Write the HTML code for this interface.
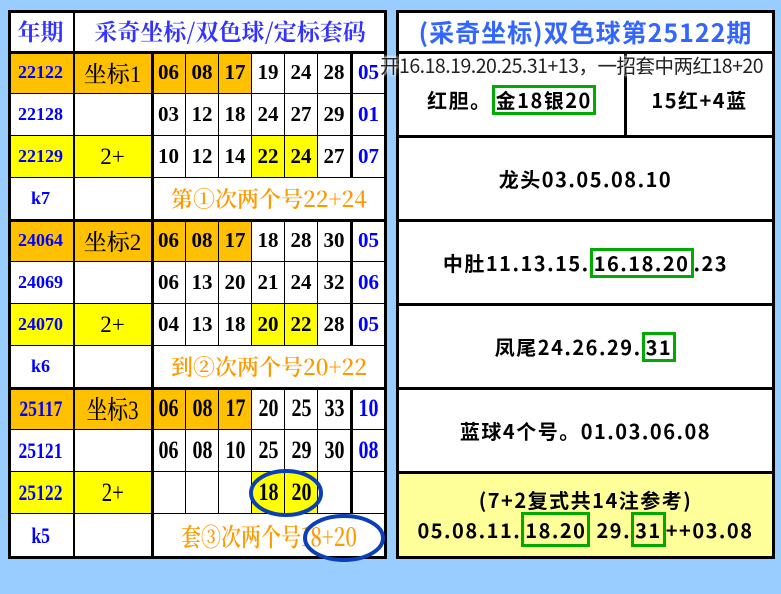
<!DOCTYPE html><html><head><meta charset="utf-8"><style>
*{margin:0;padding:0;box-sizing:border-box}
body{width:781px;height:594px;background:#99ccff;position:relative;overflow:hidden;font-family:"Liberation Serif","Noto Serif CJK SC",serif}
.c{position:absolute;display:flex;align-items:center;justify-content:center;border-right:1px solid #000;border-bottom:1px solid #000;background:#fff;white-space:nowrap}
.n{font-weight:bold;font-size:21px;color:#000}
.y{font-weight:bold;font-size:18px;color:#0000ff}
.b{color:#0000ff}
.o{background:#ffc000}
.ye{background:#ffff00}
.z{font-size:23px;font-weight:500}
.t{font-size:22px;color:#ff9900;font-family:"Noto Serif CJK SC",serif;font-weight:600}
.L{position:absolute;background:#000}
.s3 span{display:inline-block;transform:scaleX(.8)}
.s3 .n{font-size:25px}
.s3 .y{font-size:22px}
.s3 .z{font-size:26px}
.s3 .t{font-size:25px}
.r{position:absolute;background:#fff;display:flex;align-items:center;justify-content:center;font-family:"Noto Sans CJK SC",sans-serif;font-weight:bold;font-size:20px;color:#000;white-space:nowrap;letter-spacing:1.5px}
.g{border:3px solid #00aa00;padding:0 1px;line-height:24px}
</style></head><body>
<div class="c" style="left:8px;top:10px;width:66px;height:42px;font-size:23px;font-weight:bold;color:#3333ff;font-family:'Noto Serif CJK SC',serif">年期</div>
<div class="c" style="left:74px;top:10px;width:313px;height:42px;font-size:23px;font-weight:bold;color:#3333ff;font-family:'Noto Serif CJK SC',serif">采奇坐标/双色球/定标套码</div>

<div class="c y o" style="left:8px;top:52px;width:66px;height:42px">22122</div>
<div class="c z o" style="left:74px;top:52px;width:78px;height:42px">坐标1</div>
<div class="c n o" style="left:152px;top:52px;width:34px;height:42px">06</div>
<div class="c n o" style="left:186px;top:52px;width:33px;height:42px">08</div>
<div class="c n o" style="left:219px;top:52px;width:33px;height:42px">17</div>
<div class="c n" style="left:252px;top:52px;width:33px;height:42px">19</div>
<div class="c n" style="left:285px;top:52px;width:33px;height:42px">24</div>
<div class="c n" style="left:318px;top:52px;width:33px;height:42px">28</div>
<div class="c n b" style="left:351px;top:52px;width:36px;height:42px">05</div>

<div class="c y" style="left:8px;top:94px;width:66px;height:42px">22128</div>
<div class="c" style="left:74px;top:94px;width:78px;height:42px"></div>
<div class="c n" style="left:152px;top:94px;width:34px;height:42px">03</div>
<div class="c n" style="left:186px;top:94px;width:33px;height:42px">12</div>
<div class="c n" style="left:219px;top:94px;width:33px;height:42px">18</div>
<div class="c n" style="left:252px;top:94px;width:33px;height:42px">24</div>
<div class="c n" style="left:285px;top:94px;width:33px;height:42px">27</div>
<div class="c n" style="left:318px;top:94px;width:33px;height:42px">29</div>
<div class="c n b" style="left:351px;top:94px;width:36px;height:42px">01</div>

<div class="c y ye" style="left:8px;top:136px;width:66px;height:42px">22129</div>
<div class="c z ye" style="left:74px;top:136px;width:78px;height:42px">2+</div>
<div class="c n" style="left:152px;top:136px;width:34px;height:42px">10</div>
<div class="c n" style="left:186px;top:136px;width:33px;height:42px">12</div>
<div class="c n" style="left:219px;top:136px;width:33px;height:42px">14</div>
<div class="c n ye" style="left:252px;top:136px;width:33px;height:42px">22</div>
<div class="c n ye" style="left:285px;top:136px;width:33px;height:42px">24</div>
<div class="c n" style="left:318px;top:136px;width:33px;height:42px">27</div>
<div class="c n b" style="left:351px;top:136px;width:36px;height:42px">07</div>

<div class="c y" style="left:8px;top:178px;width:66px;height:42px">k7</div>
<div class="c" style="left:74px;top:178px;width:78px;height:42px"></div>
<div class="c t" style="left:152px;top:178px;width:235px;height:42px">第①次两个号22+24</div>

<div class="c y o" style="left:8px;top:220px;width:66px;height:42px">24064</div>
<div class="c z o" style="left:74px;top:220px;width:78px;height:42px">坐标2</div>
<div class="c n o" style="left:152px;top:220px;width:34px;height:42px">06</div>
<div class="c n o" style="left:186px;top:220px;width:33px;height:42px">08</div>
<div class="c n o" style="left:219px;top:220px;width:33px;height:42px">17</div>
<div class="c n" style="left:252px;top:220px;width:33px;height:42px">18</div>
<div class="c n" style="left:285px;top:220px;width:33px;height:42px">28</div>
<div class="c n" style="left:318px;top:220px;width:33px;height:42px">30</div>
<div class="c n b" style="left:351px;top:220px;width:36px;height:42px">05</div>

<div class="c y" style="left:8px;top:262px;width:66px;height:42px">24069</div>
<div class="c" style="left:74px;top:262px;width:78px;height:42px"></div>
<div class="c n" style="left:152px;top:262px;width:34px;height:42px">06</div>
<div class="c n" style="left:186px;top:262px;width:33px;height:42px">13</div>
<div class="c n" style="left:219px;top:262px;width:33px;height:42px">20</div>
<div class="c n" style="left:252px;top:262px;width:33px;height:42px">21</div>
<div class="c n" style="left:285px;top:262px;width:33px;height:42px">24</div>
<div class="c n" style="left:318px;top:262px;width:33px;height:42px">32</div>
<div class="c n b" style="left:351px;top:262px;width:36px;height:42px">06</div>

<div class="c y ye" style="left:8px;top:304px;width:66px;height:42px">24070</div>
<div class="c z ye" style="left:74px;top:304px;width:78px;height:42px">2+</div>
<div class="c n" style="left:152px;top:304px;width:34px;height:42px">04</div>
<div class="c n" style="left:186px;top:304px;width:33px;height:42px">13</div>
<div class="c n" style="left:219px;top:304px;width:33px;height:42px">18</div>
<div class="c n ye" style="left:252px;top:304px;width:33px;height:42px">20</div>
<div class="c n ye" style="left:285px;top:304px;width:33px;height:42px">22</div>
<div class="c n" style="left:318px;top:304px;width:33px;height:42px">28</div>
<div class="c n b" style="left:351px;top:304px;width:36px;height:42px">05</div>

<div class="c y" style="left:8px;top:346px;width:66px;height:42px">k6</div>
<div class="c" style="left:74px;top:346px;width:78px;height:42px"></div>
<div class="c t" style="left:152px;top:346px;width:235px;height:42px">到②次两个号20+22</div>

<div class="s3">
<div class="c y o" style="left:8px;top:388px;width:66px;height:42px"><span>25117</span></div>
<div class="c z o" style="left:74px;top:388px;width:78px;height:42px"><span>坐标3</span></div>
<div class="c n o" style="left:152px;top:388px;width:34px;height:42px"><span>06</span></div>
<div class="c n o" style="left:186px;top:388px;width:33px;height:42px"><span>08</span></div>
<div class="c n o" style="left:219px;top:388px;width:33px;height:42px"><span>17</span></div>
<div class="c n" style="left:252px;top:388px;width:33px;height:42px"><span>20</span></div>
<div class="c n" style="left:285px;top:388px;width:33px;height:42px"><span>25</span></div>
<div class="c n" style="left:318px;top:388px;width:33px;height:42px"><span>33</span></div>
<div class="c n b" style="left:351px;top:388px;width:36px;height:42px"><span>10</span></div>

<div class="c y" style="left:8px;top:430px;width:66px;height:42px"><span>25121</span></div>
<div class="c" style="left:74px;top:430px;width:78px;height:42px"></div>
<div class="c n" style="left:152px;top:430px;width:34px;height:42px"><span>06</span></div>
<div class="c n" style="left:186px;top:430px;width:33px;height:42px"><span>08</span></div>
<div class="c n" style="left:219px;top:430px;width:33px;height:42px"><span>10</span></div>
<div class="c n" style="left:252px;top:430px;width:33px;height:42px"><span>25</span></div>
<div class="c n" style="left:285px;top:430px;width:33px;height:42px"><span>29</span></div>
<div class="c n" style="left:318px;top:430px;width:33px;height:42px"><span>30</span></div>
<div class="c n b" style="left:351px;top:430px;width:36px;height:42px"><span>08</span></div>

<div class="c y ye" style="left:8px;top:472px;width:66px;height:42px"><span>25122</span></div>
<div class="c z ye" style="left:74px;top:472px;width:78px;height:42px"><span>2+</span></div>
<div class="c n" style="left:152px;top:472px;width:34px;height:42px"></div>
<div class="c n" style="left:186px;top:472px;width:33px;height:42px"></div>
<div class="c n" style="left:219px;top:472px;width:33px;height:42px"></div>
<div class="c n ye" style="left:252px;top:472px;width:33px;height:42px"><span>18</span></div>
<div class="c n ye" style="left:285px;top:472px;width:33px;height:42px"><span>20</span></div>
<div class="c n" style="left:318px;top:472px;width:33px;height:42px"></div>
<div class="c n" style="left:351px;top:472px;width:36px;height:42px"></div>

<div class="c y" style="left:8px;top:514px;width:66px;height:44px"><span>k5</span></div>
<div class="c" style="left:74px;top:514px;width:78px;height:44px"></div>
<div class="c t" style="left:152px;top:514px;width:235px;height:44px"><span>套③次两个号18+20</span></div>
</div>

<div class="L" style="left:8px;top:10px;width:379px;height:3px"></div>
<div class="L" style="left:8px;top:556px;width:379px;height:3px"></div>
<div class="L" style="left:8px;top:10px;width:3px;height:549px"></div>
<div class="L" style="left:384px;top:10px;width:3px;height:549px"></div>
<div class="L" style="left:8px;top:51px;width:379px;height:3px"></div>
<div class="L" style="left:8px;top:219px;width:379px;height:3px"></div>
<div class="L" style="left:8px;top:387px;width:379px;height:3px"></div>
<div class="L" style="left:73px;top:10px;width:2px;height:549px"></div>
<div class="L" style="left:151px;top:52px;width:3px;height:507px"></div>
<div class="L" style="left:350px;top:52px;width:3px;height:126px"></div>
<div class="L" style="left:350px;top:220px;width:3px;height:126px"></div>
<div class="L" style="left:350px;top:388px;width:3px;height:126px"></div>

<svg style="position:absolute;left:0;top:0" width="781" height="594">
<ellipse cx="286" cy="493" rx="35" ry="22" fill="none" stroke="#0b3fb8" stroke-width="4"/>
<ellipse cx="344" cy="538" rx="39" ry="22" fill="none" stroke="#0b3fb8" stroke-width="4"/>
</svg>

<div style="position:absolute;left:396px;top:10px;width:379px;height:549px;background:#000"></div>
<div class="r" style="left:399px;top:13px;width:373px;height:38px;font-weight:bold;font-size:25px;color:#3366ff;letter-spacing:1px">(采奇坐标)双色球第25122期</div>
<div class="r" style="left:399px;top:54px;width:225px;height:81px;padding-top:10px">红胆。<span class="g">金18银20</span></div>
<div class="r" style="left:627px;top:54px;width:145px;height:81px;padding-top:10px">15红+4蓝</div>
<div class="r" style="left:399px;top:138px;width:373px;height:81px">龙头03.05.08.10</div>
<div class="r" style="left:399px;top:222px;width:373px;height:81px">中肚11.13.15.<span class="g">16.18.20</span>.23</div>
<div class="r" style="left:399px;top:306px;width:373px;height:81px">凤尾24.26.29.<span class="g">31</span></div>
<div class="r" style="left:399px;top:390px;width:373px;height:81px">蓝球4个号。01.03.06.08</div>
<div class="r" style="left:399px;top:474px;width:373px;height:82px;background:#ffff99;flex-direction:column;line-height:30px"><div>(7+2复式共14注参考)</div><div>05.08.11.<span class="g">18.20</span> 29.<span class="g">31</span>++03.08</div></div>

<div style="position:absolute;left:380px;top:51px;width:401px;height:28px;font-family:'Noto Sans CJK SC',sans-serif;font-size:19.5px;color:#222;white-space:nowrap;text-shadow:0 0 3px #fff,0 0 3px #fff,0 0 4px #fff;line-height:28px;letter-spacing:-0.5px">开16.18.19.20.25.31+13，一招套中两红18+20</div>
</body></html>
